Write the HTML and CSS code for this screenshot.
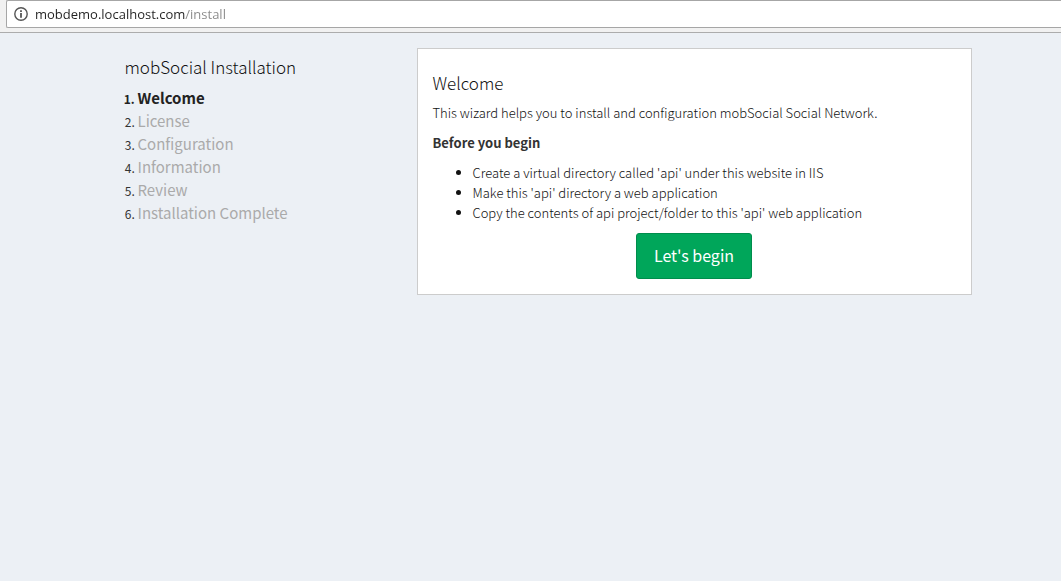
FILE: index.html
```
<!DOCTYPE html>
<html lang="en">
<head>
<meta charset="utf-8">
<meta name="viewport" content="width=device-width, initial-scale=1">
<title>mobSocial Installation</title>
<link rel="stylesheet" href="styles.css">
</head>
<body>
<header class="toolbar">
  <div class="address">
    <svg class="info-icon" viewBox="0 0 14 14" aria-hidden="true">
      <circle cx="7" cy="7" r="6.2" fill="none" stroke="#555" stroke-width="1.4"/>
      <path d="M6.1 3.3h1.8v1.6H6.1zM6.1 6h1.8v4.7H6.1z" fill="#555"/>
    </svg>
    <input class="url" type="text" aria-label="Address" value="mobdemo.localhost.com/install" spellcheck="false">
  </div>
</header>
<main class="wizard">
  <nav class="sidebar" aria-label="Installation steps">
    <h1 class="title">mobSocial Installation</h1>
    <ol class="steps">
      <li class="step step-active"><span class="step-name">Welcome</span></li>
      <li class="step"><span class="step-name">License</span></li>
      <li class="step"><span class="step-name">Configuration</span></li>
      <li class="step"><span class="step-name">Information</span></li>
      <li class="step"><span class="step-name">Review</span></li>
      <li class="step"><span class="step-name">Installation Complete</span></li>
    </ol>
  </nav>
  <section class="panel">
    <h2 class="title">Welcome</h2>
    <p class="text">This wizard helps you to install and configuration mobSocial Social Network.</p>
    <p class="text"><strong>Before you begin</strong></p>
    <ul class="tasks">
      <li>Create a virtual directory called 'api' under this website in IIS</li>
      <li>Make this 'api' directory a web application</li>
      <li>Copy the contents of api project/folder to this 'api' web application</li>
    </ul>
    <div class="actions">
      <button class="begin" type="button">Let's begin</button>
    </div>
  </section>
</main>
</body>
</html>
```
FILE: styles.css
```
* {
  box-sizing: border-box;
}

body {
  margin: 0;
  min-height: 100vh;
  background: #ecf0f5;
  color: #333;
  font-family: "Source Sans Pro", "Noto Sans CJK SC", sans-serif;
  font-size: 13px;
  line-height: 20px;
}

.toolbar {
  padding: 0 0 4px 6px;
  background: #f1f1f1;
  border-bottom: 1px solid #acacac;
}

.address {
  display: flex;
  align-items: center;
  gap: 7px;
  height: 28px;
  padding-left: 7px;
  background: #fff;
  border: 1px solid #a6a6a6;
  border-right: 0;
  border-radius: 2px 0 0 2px;
}

.info-icon {
  flex: none;
  width: 14px;
  height: 14px;
}

.url {
  flex: 1;
  min-width: 0;
  padding: 0;
  border: 0;
  outline: 0;
  background: linear-gradient(to right, #222 150px, #888 150px);
  -webkit-background-clip: text;
  background-clip: text;
  color: transparent;
  caret-color: #222;
  font-family: "Segoe UI", "Open Sans", sans-serif;
  font-size: 13px;
  line-height: 20px;
}

.wizard {
  display: grid;
  grid-template-columns: 292fr 555fr;
  align-items: start;
  max-width: 970px;
  margin: 0 auto;
  padding: 15px 44px 15px 79px;
}

.title {
  margin: 9px 0 10px;
  color: #111;
  font-size: 17px;
  font-weight: 300;
  line-height: 20px;
}

.steps {
  margin: 0;
  padding: 0 0 0 13px;
}

.step {
  height: 23px;
  font-size: 12px;
  line-height: 21px;
}

.step-name {
  color: #aaa;
  font-size: 15px;
}

.step-active,
.step-active .step-name {
  color: #222;
  font-weight: 700;
}

.panel {
  padding: 15px;
  background: #fff;
  border: 1px solid #ccc;
  color: #111;
  font-weight: 300;
}

.text {
  margin: 0 0 10px;
}

.text strong {
  color: #333;
  font-weight: 700;
}

.tasks {
  margin: 0 0 10px;
  padding-left: 40px;
}

.actions {
  text-align: center;
}

.begin {
  padding: 9px 17px 11px;
  background: #00a65a;
  border: 1px solid #008d4c;
  border-radius: 3px;
  color: #fff;
  font-family: inherit;
  font-size: 16px;
  line-height: 24px;
}
```
